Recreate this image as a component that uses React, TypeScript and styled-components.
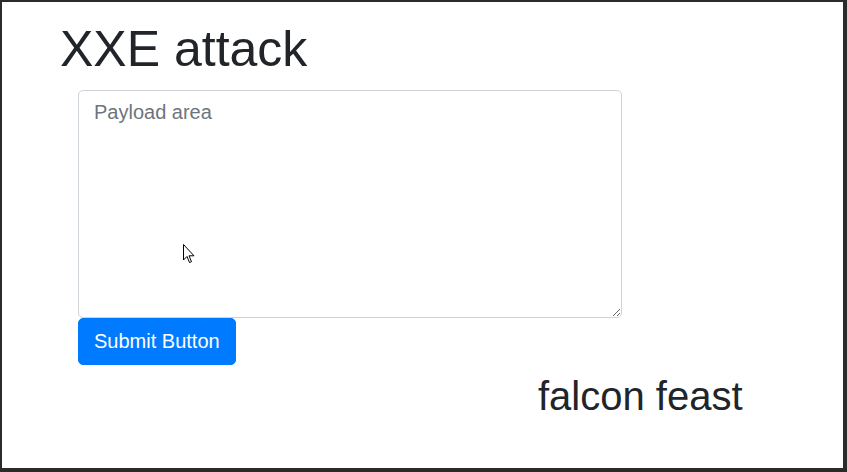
import React from "react";
import styled, { createGlobalStyle } from "styled-components";

const Global = createGlobalStyle`
  html, body { margin: 0; padding: 0; background: #ffffff; }
  body { font-family: "Liberation Sans", Arial, sans-serif; color: #212529; }
  * { box-sizing: border-box; }
`;

const Frame = styled.div`
  position: relative;
  width: 847px;
  height: 472px;
  background: #ffffff;
  border-style: solid;
  border-color: #2b2b2b;
  border-width: 2px 4px 4px 2px;
  overflow: hidden;
  display: flex;
  flex-direction: column;
  align-items: flex-start;
  padding-left: 58px;
`;

const Title = styled.h1`
  margin: 17px 0 11px 0;
  font-size: 50px;
  font-weight: 400;
  line-height: 1.2;
  color: #212529;
`;

const Form = styled.form`
  display: flex;
  flex-direction: column;
  align-items: flex-start;
  margin-left: 18px;
`;

const Payload = styled.textarea`
  display: block;
  width: 544px;
  height: 228px;
  padding: 6px 15px;
  font-family: "Liberation Sans", Arial, sans-serif;
  font-size: 20px;
  line-height: 1.5;
  color: #495057;
  background: #ffffff;
  border: 1px solid #ced4da;
  border-radius: 5px;
  outline: none;
  &::placeholder { color: #6c757d; opacity: 1; }
`;

const SubmitButton = styled.button`
  margin-top: 0;
  height: 47px;
  padding: 7px 15px 8px;
  font-family: "Liberation Sans", Arial, sans-serif;
  font-size: 20px;
  line-height: 1.5;
  color: #ffffff;
  background: #007bff;
  border: 1px solid #007bff;
  border-radius: 5px;
  cursor: pointer;
`;

const Footer = styled.h2`
  margin: 7px 0 0 478px;
  font-size: 40px;
  font-weight: 400;
  line-height: 1.2;
  color: #212529;
`;

const Cursor = styled.svg`
  position: absolute;
  left: 181px;
  top: 242px;
  pointer-events: none;
`;

export default function App() {
  return (
    <>
      <Global />
      <Frame>
        <Title>XXE attack</Title>
        <Form onSubmit={(e) => e.preventDefault()}>
          <Payload placeholder="Payload area" />
          <SubmitButton type="submit">Submit Button</SubmitButton>
        </Form>
        <Footer>falcon feast</Footer>
        <Cursor width="12" height="20" viewBox="0 0 12 20">
          <path d="M0.5 0.5 L0.5 16 L4 12.5 L6.5 18.5 L8.5 17.7 L6 11.8 L11 11.8 Z" fill="#ffffff" stroke="#000000" strokeWidth="1" />
        </Cursor>
      </Frame>
    </>
  );
}
